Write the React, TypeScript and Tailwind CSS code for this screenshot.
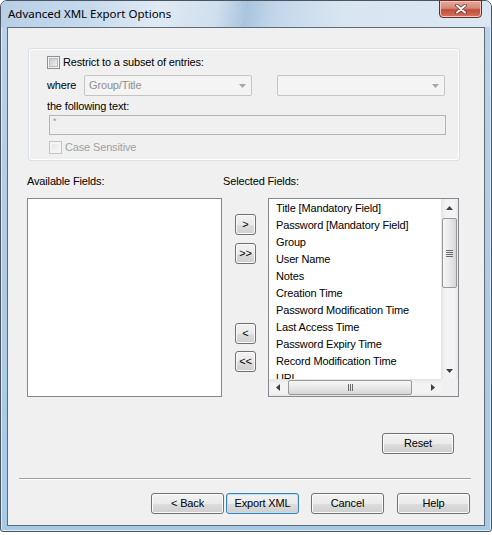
import React from 'react';

const body = "font-['Liberation_Sans',Arial,sans-serif] text-[11px] leading-[13px] tracking-[-0.15px]";

const selectedFields = [
  'Title [Mandatory Field]',
  'Password [Mandatory Field]',
  'Group',
  'User Name',
  'Notes',
  'Creation Time',
  'Password Modification Time',
  'Last Access Time',
  'Password Expiry Time',
  'Record Modification Time',
  'URL',
];

function VistaButton({ label, className = '', isDefault = false }: { label: string; className?: string; isDefault?: boolean }) {
  return (
    <button
      className={`flex items-center justify-center h-[21px] rounded-[3px] border ${
        isDefault
          ? 'border-[#3c7fb1] shadow-[inset_0_0_0_1px_#b8e3f8]'
          : 'border-[#707070] shadow-[inset_0_0_0_1px_#fbfbfb]'
      } bg-[linear-gradient(to_bottom,#f2f2f2_0%,#ebebeb_50%,#dddddd_51%,#cfcfcf_100%)] text-black ${className}`}
    >
      {label}
    </button>
  );
}

function CheckBox({ disabled = false }: { disabled?: boolean }) {
  return (
    <div
      className={`w-[13px] h-[13px] border p-[2px] bg-[#f4f4f4] ${
        disabled ? 'border-[#c4c4c4]' : 'border-[#8f8f8f]'
      }`}
    >
      <div
        className={`w-full h-full ${
          disabled
            ? 'bg-[linear-gradient(135deg,#e6e6e6,#f6f6f6)]'
            : 'bg-[linear-gradient(135deg,#c6c9cd,#eef0f2)] shadow-[0_0_0_1px_#b8bcc1]'
        }`}
      />
    </div>
  );
}

function ComboBox({ text, className = '' }: { text?: string; className?: string }) {
  return (
    <div
      className={`h-[21px] flex items-center justify-between rounded-[2px] border border-[#c4c4c4] bg-[#f4f4f4] pl-[4px] pr-[5px] ${className}`}
    >
      <span className="text-[#8f8f8f]">{text}</span>
      <svg width="7" height="4" viewBox="0 0 7 4">
        <path d="M0 0H7L3.5 4Z" fill="#a6a6a6" />
      </svg>
    </div>
  );
}

function Arrow({ dir, color = '#404040' }: { dir: 'up' | 'down' | 'left' | 'right'; color?: string }) {
  const d = {
    up: 'M0 4H7L3.5 0Z',
    down: 'M0 0H7L3.5 4Z',
    left: 'M4 0V7L0 3.5Z',
    right: 'M0 0V7L4 3.5Z',
  }[dir];
  const vertical = dir === 'up' || dir === 'down';
  return (
    <svg width={vertical ? 7 : 4} height={vertical ? 4 : 7} viewBox={vertical ? '0 0 7 4' : '0 0 4 7'}>
      <path d={d} fill={color} />
    </svg>
  );
}

function SelectedList() {
  return (
    <div className="w-[191px] h-[199px] border border-[#828790] bg-white flex flex-col">
      <div className="flex flex-1 min-h-0">
        <div className="flex-1 overflow-hidden pt-[1px]">
          {selectedFields.map((f) => (
            <div key={f} className="h-[17px] leading-[17px] pl-[7px] whitespace-nowrap">
              {f}
            </div>
          ))}
        </div>
        <div className="w-[17px] flex flex-col items-stretch bg-[linear-gradient(to_right,#e4e4e4,#f3f3f3_25%,#f3f3f3_80%,#e8e8e8)]">
          <div className="h-[17px] flex items-center justify-center">
            <Arrow dir="up" />
          </div>
          <div className="mt-[2px] mx-[1px] h-[70px] rounded-[2px] border border-[#989898] bg-[linear-gradient(to_right,#f6f6f6,#e9e9e9_50%,#d6d6d6)] flex flex-col items-center justify-center gap-[1px]">
            <div className="w-[7px] h-[1px] bg-[#6a6a6a]" />
            <div className="w-[7px] h-[1px] bg-[#6a6a6a]" />
            <div className="w-[7px] h-[1px] bg-[#6a6a6a]" />
            <div className="w-[7px] h-[1px] bg-[#6a6a6a]" />
          </div>
          <div className="flex-1" />
          <div className="h-[17px] flex items-center justify-center">
            <Arrow dir="down" />
          </div>
        </div>
      </div>
      <div className="h-[17px] flex">
        <div className="flex-1 flex items-center bg-[linear-gradient(to_bottom,#e4e4e4,#f3f3f3_25%,#f3f3f3_80%,#e8e8e8)]">
          <div className="w-[17px] flex items-center justify-center">
            <Arrow dir="left" />
          </div>
          <div className="ml-[2px] w-[124px] h-[15px] rounded-[2px] border border-[#989898] bg-[linear-gradient(to_bottom,#f6f6f6,#e9e9e9_50%,#d6d6d6)] flex items-center justify-center gap-[1px]">
            <div className="w-[1px] h-[7px] bg-[#6a6a6a]" />
            <div className="w-[1px] h-[7px] bg-[#6a6a6a]" />
            <div className="w-[1px] h-[7px] bg-[#6a6a6a]" />
          </div>
          <div className="flex-1" />
          <div className="w-[17px] flex items-center justify-center">
            <Arrow dir="right" />
          </div>
        </div>
        <div className="w-[17px] bg-[#f0f0f0]" />
      </div>
    </div>
  );
}

const App: React.FC = () => {
  return (
    <div className={`w-[492px] h-[535px] bg-white ${body}`}>
      <div className="w-[492px] h-[532px] rounded-t-[7px] rounded-b-[3px] border border-[#4a5561] bg-[linear-gradient(to_bottom,#bcd3e8,#b0cbe3_50%,#a6cae6)] shadow-[inset_0_0_0_1px_#dfeaf4] px-[6px] pb-[5px] flex flex-col">
        {/* title bar */}
        <div className="h-[26px] -mx-[6px] pl-[7px] pr-[9px] flex items-start justify-between rounded-t-[6px] bg-[linear-gradient(100deg,#b7cfe6_0%,#c6daed_18%,#e0eaf4_32%,#cfdfed_44%,#a9c5de_50%,#c3d7ea_56%,#d9e6f2_70%,#dbe7f2_100%)]">
          <span className="mt-[5px] font-['Noto_Sans',sans-serif] text-[11.5px] leading-[16px] tracking-normal text-black">
            Advanced XML Export Options
          </span>
          <div className="-mt-[1px] w-[43px] h-[18px] rounded-b-[4px] border border-[#6b2c26] bg-[linear-gradient(to_bottom,#e5ab9b_0%,#d58877_45%,#c14b3a_55%,#d5745f_100%)] shadow-[inset_0_0_0_1px_#f0c8bd] flex items-center justify-center">
            <svg width="14" height="10" viewBox="0 0 14 10">
              <path d="M3 1.5L11 8.5M11 1.5L3 8.5" stroke="#6a332c" strokeWidth="3.6" strokeLinecap="round" />
              <path d="M3 1.5L11 8.5M11 1.5L3 8.5" stroke="#ffffff" strokeWidth="2" strokeLinecap="round" />
            </svg>
          </div>
        </div>

        {/* client area */}
        <div className="flex-1 border border-[#5d6a77] bg-[#f0f0f0] flex flex-col">
          {/* group box */}
          <div className="ml-[20px] mt-[20px] w-[432px] h-[113px] rounded-[3px] border border-[#d5dfe5] shadow-[inset_0_0_0_1px_#ffffff] pl-[18px] pt-[7px] flex flex-col">
            <div className="flex items-center gap-[3px]">
              <CheckBox />
              <span>Restrict to a subset of entries:</span>
            </div>
            <div className="mt-[6px] flex items-center">
              <span className="w-[37px]">where</span>
              <ComboBox text="Group/Title" className="w-[168px]" />
              <ComboBox className="ml-[25px] w-[168px]" />
            </div>
            <span className="mt-[4px]">the following text:</span>
            <div className="mt-[2px] ml-[2px] w-[397px] h-[20px] border border-[#b5b5b5] bg-[#f0f0f0] pl-[3px] text-[9px] leading-[10px] text-[#9a9a9a]">
              *
            </div>
            <div className="mt-[6px] ml-[2px] flex items-center gap-[3px] text-[#a0a0a0]">
              <CheckBox disabled />
              <span>Case Sensitive</span>
            </div>
          </div>

          {/* field labels */}
          <div className="mt-[14px] flex">
            <span className="ml-[19px] w-[196px]">Available Fields:</span>
            <span>Selected Fields:</span>
          </div>

          {/* field lists */}
          <div className="mt-[10px] ml-[19px] flex">
            <div className="w-[195px] h-[199px] border border-[#828790] bg-white" />
            <div className="ml-[13px] w-[21px] flex flex-col pt-[16px]">
              <VistaButton label=">" className="w-[21px]" />
              <VistaButton label=">>" className="mt-[8px] w-[21px]" />
              <VistaButton label="<" className="mt-[59px] w-[21px]" />
              <VistaButton label="<<" className="mt-[7px] w-[21px]" />
            </div>
            <div className="ml-[12px]">
              <SelectedList />
            </div>
          </div>

          <div className="mt-[36px] pr-[30px] flex justify-end">
            <VistaButton label="Reset" className="w-[72px]" />
          </div>

          <div className="mt-[24px] ml-[11px] w-[452px] h-[1px] bg-[#a0a0a0] shadow-[0_1px_0_#ffffff]" />

          <div className="mt-[14px] ml-[143px] flex">
            <VistaButton label="< Back" className="w-[73px]" />
            <VistaButton label="Export XML" isDefault className="ml-[2px] w-[73px]" />
            <VistaButton label="Cancel" className="ml-[12px] w-[73px]" />
            <VistaButton label="Help" className="ml-[13px] w-[73px]" />
          </div>
        </div>
      </div>
    </div>
  );
};

export default App;
